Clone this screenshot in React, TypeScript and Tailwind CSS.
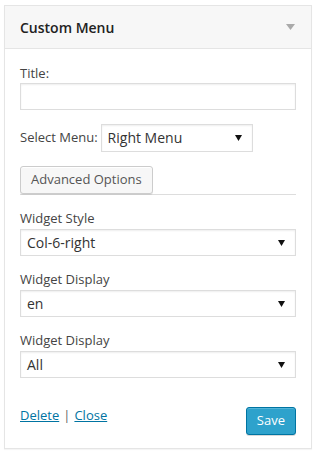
import { ReactNode } from 'react';

const font = { fontFamily: '"Open Sans", "Liberation Sans", Arial, sans-serif' };

function Arrow() {
  return (
    <svg width="7" height="6" viewBox="0 0 7 6" className="shrink-0">
      <path d="M0 0 H7 L3.5 6 Z" fill="#111" />
    </svg>
  );
}

function FakeSelect({ value, className = '' }: { value: string; className?: string }) {
  return (
    <div
      className={`flex items-center justify-between bg-white border border-[#dddddd] shadow-[inset_0_1px_2px_rgba(0,0,0,0.07)] pl-[6px] pr-[10px] text-[14px] text-[#333] ${className}`}
    >
      <span className="leading-none">{value}</span>
      <Arrow />
    </div>
  );
}

function Field({ label, children }: { label: string; children: ReactNode }) {
  return (
    <div className="flex flex-col">
      <label className="text-[13px] leading-[18px] text-[#444]">{label}</label>
      <div className="mt-[2px]">{children}</div>
    </div>
  );
}

export default function App() {
  return (
    <div className="min-h-[455px] bg-white pt-[5px]" style={font}>
      <div className="mx-1 border border-[#e5e5e5] bg-white shadow-[0_1px_1px_rgba(0,0,0,0.04)]">
        {/* header */}
        <div className="flex items-center justify-between h-[43px] bg-[#f7f7f7] border-b border-[#e5e5e5] pl-[15px] pr-[16px]">
          <h3 className="text-[14px] font-semibold text-[#222]">Custom Menu</h3>
          <svg width="9" height="6" viewBox="0 0 9 6">
            <path d="M0 0 H9 L4.5 6 Z" fill="#aaaaaa" />
          </svg>
        </div>

        {/* body */}
        <div className="px-[15px] pt-[15px] pb-[13px]">
          <div className="flex flex-col">
            <label className="text-[13px] leading-[18px] text-[#444]">Title:</label>
            <div className="mt-[1px] h-[27px] border border-[#dddddd] bg-white shadow-[inset_0_1px_2px_rgba(0,0,0,0.07)]" />
          </div>

          <div className="flex items-center mt-[14px] gap-[3px]">
            <span className="text-[13px] text-[#444]">Select Menu:</span>
            <FakeSelect value="Right Menu" className="w-[152px] h-[28px]" />
          </div>

          <div className="mt-[14px] border-b border-[#dddddd]">
            <button className="block h-[28px] px-[10px] rounded-[3px] border border-[#cccccc] bg-[#f7f7f7] text-[13px] text-[#555] shadow-[inset_0_1px_0_#fff,0_1px_0_rgba(0,0,0,0.08)]">
              Advanced Options
            </button>
          </div>

          <div className="mt-[14px] flex flex-col gap-[14px]">
            <Field label="Widget Style">
              <FakeSelect value="Col-6-right" className="h-[27px]" />
            </Field>
            <Field label="Widget Display">
              <FakeSelect value="en" className="h-[27px]" />
            </Field>
            <Field label="Widget Display">
              <FakeSelect value="All" className="h-[27px]" />
            </Field>
          </div>

          <div className="flex items-center justify-between mt-[29px]">
            <div className="text-[13px] text-[#666] mt-[-10px]">
              <a href="#" className="text-[#0074a2] underline">Delete</a>
              <span className="mx-[4px]">|</span>
              <a href="#" className="text-[#0074a2] underline">Close</a>
            </div>
            <button className="h-[28px] px-[10px] rounded-[3px] border border-[#0074a2] bg-[#2ea2cc] text-[13px] text-white shadow-[inset_0_1px_0_rgba(120,200,230,0.5),0_1px_0_rgba(0,0,0,0.15)]">
              Save
            </button>
          </div>
        </div>
      </div>
    </div>
  );
}
